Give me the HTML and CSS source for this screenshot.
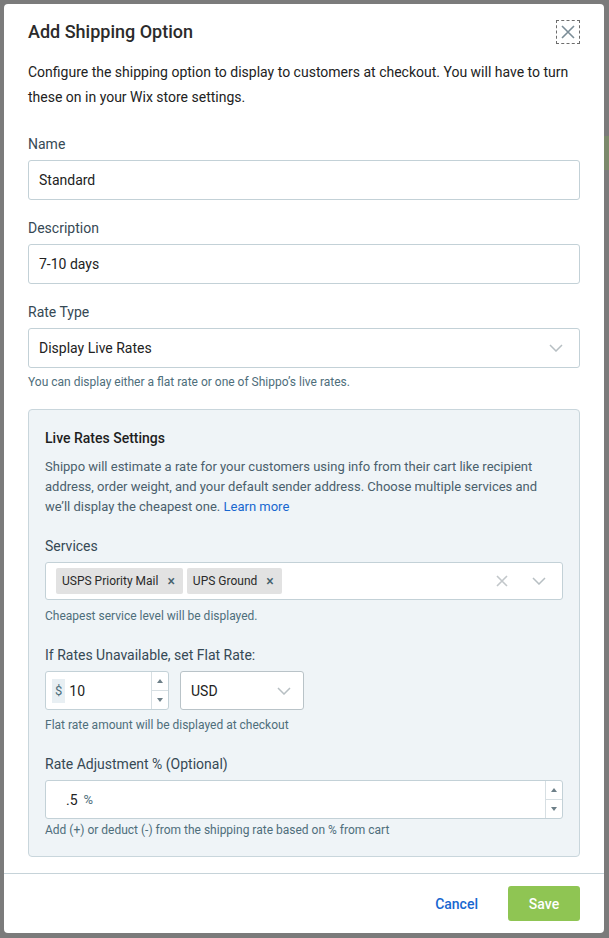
FILE: index.html
```html
<!DOCTYPE html>
<html lang="en">
<head>
<meta charset="utf-8">
<title>Add Shipping Option</title>
<link rel="stylesheet" href="styles.css">
</head>
<body>
<div class="backdrop">
  <div class="bg-green"></div>
  <div class="modal">
    <div class="modal-body">
      <div class="header">
        <h1 class="title">Add Shipping Option</h1>
        <button class="close" aria-label="Close">
          <svg width="16" height="16" viewBox="0 0 16 16"><path d="M2 2L14 14M14 2L2 14" stroke="#7b8d97" stroke-width="1.6" fill="none"/></svg>
        </button>
      </div>
      <p class="intro">Configure the shipping option to display to customers at checkout. You will have to turn these on in your Wix store settings.</p>

      <div class="field">
        <label class="label">Name</label>
        <div class="input">Standard</div>
      </div>
      <div class="field">
        <label class="label">Description</label>
        <div class="input">7-10 days</div>
      </div>
      <div class="field">
        <label class="label">Rate Type</label>
        <div class="input select">
          <span>Display Live Rates</span>
          <svg class="chev" width="14" height="8" viewBox="0 0 14 8"><path d="M1 1L7 7L13 1" stroke="#b7bfc3" stroke-width="1.5" fill="none"/></svg>
        </div>
        <div class="help">You can display either a flat rate or one of Shippo’s live rates.</div>
      </div>

      <div class="panel">
        <div class="panel-title">Live Rates Settings</div>
        <p class="panel-text">Shippo will estimate a rate for your customers using info from their cart like recipient address, order weight, and your default sender address. Choose multiple services and we’ll display the cheapest one. <a class="link">Learn more</a></p>

        <div class="pfield">
          <label class="label">Services</label>
          <div class="multi">
            <div class="chips">
              <span class="chip">USPS Priority Mail <span class="chip-x">×</span></span>
              <span class="chip">UPS Ground <span class="chip-x">×</span></span>
            </div>
            <div class="multi-icons">
              <svg width="12" height="12" viewBox="0 0 12 12"><path d="M1 1L11 11M11 1L1 11" stroke="#c2c7ca" stroke-width="1.6" fill="none"/></svg>
              <svg class="chev" width="14" height="8" viewBox="0 0 14 8"><path d="M1 1L7 7L13 1" stroke="#b7bfc3" stroke-width="1.5" fill="none"/></svg>
            </div>
          </div>
          <div class="help help-services">Cheapest service level will be displayed.</div>
        </div>

        <div class="pfield">
          <label class="label">If Rates Unavailable, set Flat Rate:</label>
          <div class="row">
            <div class="num">
              <span class="prefix">$</span>
              <span class="num-val">10</span>
              <span class="spin"><span class="up"></span><span class="down"></span></span>
            </div>
            <div class="currency">
              <span>USD</span>
              <svg class="chev" width="14" height="8" viewBox="0 0 14 8"><path d="M1 1L7 7L13 1" stroke="#b7bfc3" stroke-width="1.5" fill="none"/></svg>
            </div>
          </div>
          <div class="help help-flat">Flat rate amount will be displayed at checkout</div>
        </div>

        <div class="pfield">
          <label class="label">Rate Adjustment % (Optional)</label>
          <div class="num wide">
            <span class="num-val pct">.5</span>
            <span class="pct-sign">%</span>
            <span class="spin"><span class="up"></span><span class="down"></span></span>
          </div>
          <div class="help help-adj">Add (+) or deduct (-) from the shipping rate based on % from cart</div>
        </div>
      </div>
    </div>
    <div class="footer">
      <a class="cancel">Cancel</a>
      <button class="save">Save</button>
    </div>
  </div>
</div>
</body>
</html>
```

FILE: styles.css
```css
* { box-sizing: border-box; }
html, body {
  margin: 0;
  padding: 0;
  background: #7b7b7b;
  font-family: Roboto, "Liberation Sans", Arial, sans-serif;
}
.backdrop {
  position: relative;
  width: 609px;
  height: 938px;
  padding: 4px 5px 0 4px;
}
.bg-green {
  position: absolute;
  right: 0;
  top: 136px;
  width: 6px;
  height: 34px;
  background: #7c8a6c;
}
.modal {
  position: relative;
  width: 600px;
  height: 929px;
  background: #fff;
  border-radius: 4px;
  display: flex;
  flex-direction: column;
}
.modal-body {
  padding: 16px 24px 0 24px;
  flex: 1;
}
.header {
  display: flex;
  justify-content: space-between;
  align-items: center;
  height: 24px;
}
.title {
  margin: 0;
  font-size: 18px;
  font-weight: 500;
  color: #2b2b2b;
  line-height: 24px;
}
.close {
  width: 24px;
  height: 24px;
  padding: 0;
  border: 1px dashed #6d6d6d;
  background: #fff;
  display: flex;
  align-items: center;
  justify-content: center;
}
.intro {
  margin: 16px 0 0;
  font-size: 14px;
  line-height: 25px;
  color: #222;
}
.field { margin-top: 24px; }
.field + .field { margin-top: 18px; }
.label {
  display: block;
  font-size: 14px;
  line-height: 20px;
  color: #364955;
  margin-bottom: 6px;
}
.input {
  height: 40px;
  border: 1px solid #c3d1d7;
  border-radius: 3px;
  padding: 0 10px;
  display: flex;
  align-items: center;
  font-size: 14px;
  color: #222;
}
.select { justify-content: space-between; padding-right: 16px; }
.help {
  font-size: 12px;
  line-height: 16px;
  color: #4e6e7b;
  margin-top: 6px;
}
.help-services { margin-top: 8px; }
.help-flat { margin-top: 7px; }
.help-adj { margin-top: 3px; }
.panel {
  margin-top: 19px;
  background: #eff4f7;
  border: 1px solid #c9d6dc;
  border-radius: 4px;
  padding: 18px 16px 18px 16px;
}
.panel-title {
  font-size: 14px;
  font-weight: 500;
  line-height: 20px;
  color: #1e1e1e;
}
.panel-text {
  margin: 9px 0 0;
  font-size: 13px;
  line-height: 20px;
  color: #4a606c;
}
.link { color: #1767d0; }
.pfield { margin-top: 19px; }
.pfield + .pfield { margin-top: 21px; }
.multi {
  height: 38px;
  background: #fff;
  border: 1px solid #c3d1d7;
  border-radius: 3px;
  display: flex;
  align-items: center;
  justify-content: space-between;
  padding: 0 16px 0 10px;
}
.chips { display: flex; gap: 4px; }
.chip {
  background: #e2e2e2;
  border-radius: 2px;
  height: 26px;
  display: flex;
  align-items: center;
  padding: 0 8px 0 6px;
  font-size: 12px;
  color: #2a2a2a;
}
.chip-x {
  margin-left: 9px;
  font-size: 14px;
  color: #45606c;
  font-weight: 500;
}
.multi-icons { display: flex; align-items: center; gap: 24px; }
.row { display: flex; gap: 11px; }
.num {
  position: relative;
  width: 124px;
  height: 39px;
  background: #fff;
  border: 1px solid #c3d1d7;
  border-radius: 3px;
  display: flex;
  align-items: center;
  padding-left: 6px;
  font-size: 14px;
  color: #222;
}
.num.wide { width: 100%; padding-left: 20px; }
.prefix {
  background: #e8eff3;
  color: #4e6e7b;
  font-size: 13px;
  height: 24px;
  padding: 0 3px;
  display: flex;
  align-items: center;
  margin-right: 4px;
}
.pct { margin-right: 6px; }
.pct-sign { font-size: 13px; color: #4e6e7b; }
.spin {
  position: absolute;
  right: 0;
  top: 0;
  bottom: 0;
  width: 17px;
  border-left: 1px solid #d7dfe3;
  display: flex;
  flex-direction: column;
}
.spin .up, .spin .down {
  flex: 1;
  display: flex;
  align-items: center;
  justify-content: center;
}
.spin .up { border-bottom: 1px solid #d7dfe3; }
.spin .up::after {
  content: "";
  border-left: 3px solid transparent;
  border-right: 3px solid transparent;
  border-bottom: 4px solid #6d7f88;
}
.spin .down::after {
  content: "";
  border-left: 3px solid transparent;
  border-right: 3px solid transparent;
  border-top: 4px solid #6d7f88;
}
.currency {
  width: 124px;
  height: 39px;
  background: #fff;
  border: 1px solid #b9c3c8;
  border-radius: 3px;
  display: flex;
  align-items: center;
  justify-content: space-between;
  padding: 0 12px 0 10px;
  font-size: 14px;
  color: #222;
}
.footer {
  border-top: 1px solid #c6d3d9;
  height: 62px;
  display: flex;
  align-items: center;
  justify-content: flex-end;
  gap: 30px;
  padding: 0 24px 0 0;
  margin-top: 16px;
}
.cancel {
  color: #1767d0;
  font-size: 14px;
  font-weight: 500;
}
.save {
  width: 72px;
  height: 35px;
  border: none;
  border-radius: 3px;
  background: #8fc553;
  color: #fff;
  font-family: inherit;
  font-size: 14px;
  font-weight: 500;
}
```
